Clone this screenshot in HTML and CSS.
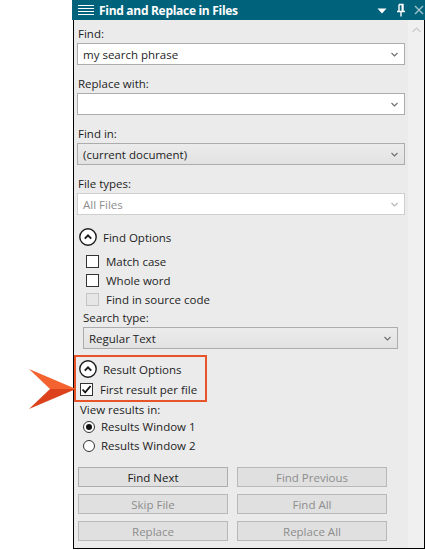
FILE: index.html
```html
<!DOCTYPE html>
<html>
<head>
<meta charset="utf-8">
<title>Find and Replace in Files</title>
<link rel="stylesheet" href="styles.css">
</head>
<body>
<div class="panel">
  <div class="titlebar">
    <svg class="menu-icon" width="16" height="12" viewBox="0 0 16 12"><path d="M0 1.5H16M0 4.5H16M0 7.5H16M0 10.5H16" stroke="#fff" stroke-width="1"/></svg>
    <span class="title">Find and Replace in Files</span>
    <span class="spacer"></span>
    <svg class="tb-icon" width="10" height="8" viewBox="0 0 10 8"><path d="M0.5 2.5H9.5L5 7.5Z" fill="#fff"/></svg>
    <svg class="tb-icon pin" width="10" height="14" viewBox="0 0 10 14"><path d="M3 1.5H7V8M3 1.5V8M1 8.5H9M5 8.5V13.5" stroke="#fff" stroke-width="1.4" fill="none"/><rect x="5.5" y="1.5" width="1.5" height="7" fill="#fff"/></svg>
    <svg class="tb-icon close" width="10" height="10" viewBox="0 0 10 10"><path d="M1 1L9 9M9 1L1 9" stroke="#9fc3cc" stroke-width="1.4"/></svg>
  </div>
  <div class="body">
    <div class="content">
      <div class="field">
        <div class="label">Find:</div>
        <div class="combo"><span class="combo-text">my search phrase</span><svg class="chev" width="7" height="5" viewBox="0 0 7 5"><path d="M0.5 1L3.5 4L6.5 1" stroke="#6d6d6d" stroke-width="1.1" fill="none"/></svg></div>
      </div>
      <div class="field">
        <div class="label">Replace with:</div>
        <div class="combo"><span class="combo-text"></span><svg class="chev" width="7" height="5" viewBox="0 0 7 5"><path d="M0.5 1L3.5 4L6.5 1" stroke="#6d6d6d" stroke-width="1.1" fill="none"/></svg></div>
      </div>
      <div class="field">
        <div class="label">Find in:</div>
        <div class="combo combo-btn"><span class="combo-text">(current document)</span><svg class="chev" width="7" height="5" viewBox="0 0 7 5"><path d="M0.5 1L3.5 4L6.5 1" stroke="#6d6d6d" stroke-width="1.1" fill="none"/></svg></div>
      </div>
      <div class="field">
        <div class="label">File types:</div>
        <div class="combo combo-disabled"><span class="combo-text">All Files</span><svg class="chev" width="7" height="5" viewBox="0 0 7 5"><path d="M0.5 1L3.5 4L6.5 1" stroke="#b5b5b5" stroke-width="1.1" fill="none"/></svg></div>
      </div>

      <div class="section-head">
        <svg class="collapse" width="18" height="18" viewBox="0 0 18 18"><circle cx="9" cy="9" r="8.2" stroke="#1b1b1b" stroke-width="1.4" fill="#fff"/><path d="M5.8 10.6L9 7.4L12.2 10.6" stroke="#1b1b1b" stroke-width="2" fill="none"/></svg>
        <span>Find Options</span>
      </div>
      <div class="options">
        <label class="check-row"><span class="box"></span><span>Match case</span></label>
        <label class="check-row"><span class="box"></span><span>Whole word</span></label>
        <label class="check-row"><span class="box box-disabled"></span><span>Find in source code</span></label>
        <div class="sub-label">Search type:</div>
        <div class="combo combo-btn combo-small"><span class="combo-text">Regular Text</span><svg class="chev" width="7" height="5" viewBox="0 0 7 5"><path d="M0.5 1L3.5 4L6.5 1" stroke="#6d6d6d" stroke-width="1.1" fill="none"/></svg></div>
      </div>

      <div class="highlight">
        <div class="section-head inner-head">
          <svg class="collapse" width="18" height="18" viewBox="0 0 18 18"><circle cx="9" cy="9" r="8.2" stroke="#1b1b1b" stroke-width="1.4" fill="#fff"/><path d="M5.8 10.6L9 7.4L12.2 10.6" stroke="#1b1b1b" stroke-width="2" fill="none"/></svg>
          <span>Result Options</span>
        </div>
        <label class="check-row first-result"><span class="box"><svg width="11" height="11" viewBox="0 0 11 11"><path d="M1.5 5.5L4.2 8.3L9.6 2" stroke="#111" stroke-width="1.8" fill="none"/></svg></span><span>First result per file</span></label>
      </div>

      <div class="view-label">View results in:</div>
      <label class="radio-row"><span class="radio radio-on"></span><span>Results Window 1</span></label>
      <label class="radio-row"><span class="radio"></span><span>Results Window 2</span></label>

      <div class="buttons">
        <div class="btn">Find Next</div>
        <div class="btn btn-off">Find Previous</div>
        <div class="btn btn-off">Skip File</div>
        <div class="btn btn-off">Find All</div>
        <div class="btn btn-off">Replace</div>
        <div class="btn btn-off">Replace All</div>
      </div>
    </div>
    <div class="scrollbar">
      <svg width="9" height="6" viewBox="0 0 9 6"><path d="M0.5 5L4.5 1L8.5 5" stroke="#c9c9c9" stroke-width="1.1" fill="none"/></svg>
    </div>
  </div>
</div>
<svg class="callout" width="56" height="44" viewBox="0 0 56 44">
  <path d="M2 1L49 21H23Z" fill="#f3622f"/>
  <path d="M23 21H49L2 41Z" fill="#dc431c"/>
</svg>
</body>
</html>
```

FILE: styles.css
```css
html, body {
  margin: 0;
  padding: 0;
}
body {
  width: 425px;
  height: 550px;
  overflow: hidden;
  position: relative;
  background: #fff;
  font-family: "Open Sans", "Noto Sans", sans-serif;
  font-size: 11.5px;
  color: #1e1e1e;
}
.panel {
  margin-left: 72px;
  width: 353px;
  height: 549px;
  display: flex;
  flex-direction: column;
}
.titlebar {
  height: 20px;
  background: #00637b;
  color: #fff;
  display: flex;
  align-items: center;
  padding-left: 6px;
  flex: none;
}
.menu-icon { flex: none; }
.title {
  margin-left: 5px;
  font-weight: 700;
  font-size: 12px;
  letter-spacing: -0.3px;
}
.spacer { flex: 1; }
.tb-icon { flex: none; }
.pin { margin-left: 9px; }
.close { margin-left: 8px; margin-right: 1px; }

.body {
  flex: 1;
  margin-left: 1px;
  border-left: 1px solid #000;
  border-right: 1px solid #000;
  border-bottom: 1px solid #000;
  display: flex;
  background: #ebebeb;
}
.content {
  flex: 1;
  padding: 6px 3px 0 3px;
  display: flex;
  flex-direction: column;
}
.scrollbar {
  width: 16px;
  background: #f0f0f0;
  display: flex;
  justify-content: center;
  padding-top: 7px;
  box-sizing: border-box;
  align-items: flex-start;
}

.field { margin-bottom: 11px; }
.label {
  line-height: 16px;
  padding-left: 1px;
  margin-bottom: 1px;
}
.combo {
  height: 22px;
  box-sizing: border-box;
  border: 1px solid #acacac;
  background: #fff;
  display: flex;
  align-items: center;
  padding: 0 6px 0 5px;
}
.combo-text { flex: 1; white-space: nowrap; }
.chev { flex: none; }
.combo-btn {
  background: linear-gradient(#ececec, #e2e2e2);
}
.combo-disabled {
  border-color: #cfcfcf;
  color: #8e8e8e;
}

.section-head {
  display: flex;
  align-items: center;
  height: 18px;
  margin-top: 2px;
  padding-left: 2px;
  gap: 6px;
}
.collapse { flex: none; }

.options {
  margin-top: 6px;
  padding-left: 6px;
  display: flex;
  flex-direction: column;
}
.check-row {
  display: flex;
  align-items: center;
  height: 19px;
  gap: 7px;
  padding-left: 3px;
}
.box {
  width: 13px;
  height: 13px;
  box-sizing: border-box;
  border: 1px solid #333;
  background: #fff;
  flex: none;
  display: flex;
  align-items: center;
  justify-content: center;
}
.box-disabled {
  background: #e6e6e6;
  border-color: #c4c4c4;
}
.sub-label {
  line-height: 18px;
  margin-top: 0;
}
.combo-small {
  margin-top: 0;
  width: 315px;
}

.highlight {
  margin-top: 6px;
  margin-left: -3px;
  width: 133px;
  box-sizing: border-box;
  border: 2px solid #e8542a;
  padding: 3px 0 1px 3px;
}
.inner-head {
  margin-top: 0;
  padding-left: 0;
}
.first-result {
  margin-top: 2px;
  padding-left: 1px;
}

.view-label {
  line-height: 15px;
  padding-left: 3px;
}
.radio-row {
  display: flex;
  align-items: center;
  height: 19px;
  gap: 6px;
  padding-left: 6px;
}
.radio {
  width: 12px;
  height: 12px;
  box-sizing: border-box;
  border: 1px solid #333;
  border-radius: 50%;
  background: #fff;
  flex: none;
  display: flex;
  align-items: center;
  justify-content: center;
}
.radio-on::after {
  content: "";
  width: 6px;
  height: 6px;
  border-radius: 50%;
  background: #111;
}

.buttons {
  margin-top: 12px;
  padding-left: 1px;
  display: grid;
  grid-template-columns: 150px 150px;
  column-gap: 9px;
  row-gap: 7px;
}
.btn {
  height: 20px;
  box-sizing: border-box;
  border: 1px solid #adadad;
  background: #e1e1e1;
  display: flex;
  align-items: center;
  justify-content: center;
  color: #1a1a1a;
}
.btn-off {
  color: #8d8d8d;
  border-color: #b8b8b8;
  background: #e0e0e0;
}

.callout {
  position: absolute;
  left: 27px;
  top: 368px;
}
```
